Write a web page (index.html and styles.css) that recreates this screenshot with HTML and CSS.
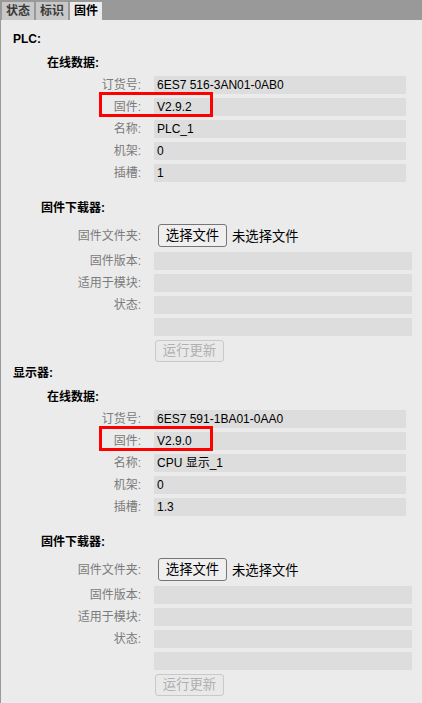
FILE: index.html
```html
<!DOCTYPE html>
<html lang="zh-CN">
<head>
<meta charset="utf-8">
<title>固件</title>
<link rel="stylesheet" href="styles.css">
</head>
<body>
<div class="tabs">
  <div class="tab">状态</div>
  <div class="tab">标识</div>
  <div class="tab active">固件</div>
</div>
<div class="panel">
  <section class="device">
    <div class="dev-title">PLC:</div>
    <div class="group-title">在线数据:</div>
    <div class="grid online">
      <div class="lbl">订货号:</div><div class="val">6ES7 516-3AN01-0AB0</div>
      <div class="lbl">固件:</div><div class="val">V2.9.2</div>
      <div class="lbl">名称:</div><div class="val">PLC_1</div>
      <div class="lbl">机架:</div><div class="val">0</div>
      <div class="lbl">插槽:</div><div class="val">1</div>
      <div class="mark"></div>
    </div>
    <div class="group-title dl">固件下载器:</div>
    <div class="file-row">
      <div class="lbl">固件文件夹:</div>
      <div class="file"><button class="btn" type="button">选择文件</button><span class="nofile">未选择文件</span></div>
    </div>
    <div class="grid dlgrid">
      <div class="lbl">固件版本:</div><div class="val"></div>
      <div class="lbl">适用于模块:</div><div class="val"></div>
      <div class="lbl">状态:</div><div class="val"></div>
      <div class="lbl"></div><div class="val"></div>
    </div>
    <div class="run-row"><button class="btn" type="button" disabled>运行更新</button></div>
  </section>

  <section class="device second">
    <div class="dev-title">显示器:</div>
    <div class="group-title">在线数据:</div>
    <div class="grid online">
      <div class="lbl">订货号:</div><div class="val">6ES7 591-1BA01-0AA0</div>
      <div class="lbl">固件:</div><div class="val">V2.9.0</div>
      <div class="lbl">名称:</div><div class="val">CPU 显示_1</div>
      <div class="lbl">机架:</div><div class="val">0</div>
      <div class="lbl">插槽:</div><div class="val">1.3</div>
      <div class="mark"></div>
    </div>
    <div class="group-title dl">固件下载器:</div>
    <div class="file-row">
      <div class="lbl">固件文件夹:</div>
      <div class="file"><button class="btn" type="button">选择文件</button><span class="nofile">未选择文件</span></div>
    </div>
    <div class="grid dlgrid">
      <div class="lbl">固件版本:</div><div class="val"></div>
      <div class="lbl">适用于模块:</div><div class="val"></div>
      <div class="lbl">状态:</div><div class="val"></div>
      <div class="lbl"></div><div class="val"></div>
    </div>
    <div class="run-row"><button class="btn" type="button" disabled>运行更新</button></div>
  </section>
</div>
</body>
</html>
```

FILE: styles.css
```css
* { box-sizing: border-box; }
html, body {
  margin: 0;
  padding: 0;
  background: #ebebeb;
}
body {
  font-family: "Liberation Sans", "Noto Sans CJK SC", sans-serif;
  font-size: 12px;
  color: #000;
  height: 703px;
  overflow: hidden;
}
.tabs {
  display: flex;
  gap: 2px;
  height: 20px;
  padding: 2px 0 0 2px;
  background: #999999;
}
.tab {
  height: 18px;
  line-height: 18px;
  padding: 0 4px;
  font-weight: bold;
  color: #3a3a3a;
  background: #c8c8c8;
}
.tab.active {
  background: #ebebeb;
  color: #000;
}
.panel {
  border-left: 1px solid #999999;
  background: #ebebeb;
  padding-top: 10px;
  height: 683px;
}
.device.second { margin-top: 2px; }
.dev-title {
  height: 18px;
  line-height: 18px;
  padding-left: 12px;
  font-weight: bold;
}
.group-title {
  margin-top: 6px;
  height: 18px;
  line-height: 18px;
  padding-left: 46px;
  font-weight: bold;
}
.group-title.dl {
  margin-top: 17px;
  padding-left: 40px;
}
.grid {
  position: relative;
  display: grid;
  grid-template-columns: 140px 252px;
  column-gap: 13px;
  row-gap: 4px;
  margin-top: 4px;
}
.grid.dlgrid {
  grid-template-columns: 140px 258px;
  margin-top: 5px;
}
.lbl {
  height: 18px;
  line-height: 18px;
  text-align: right;
  color: #7a7a7a;
  white-space: nowrap;
}
.val {
  height: 18px;
  line-height: 18px;
  padding-left: 3px;
  background: #dddddd;
  white-space: nowrap;
}
.mark {
  position: absolute;
  left: 98px;
  top: 16px;
  width: 114px;
  height: 25px;
  border: 3px solid #ff0000;
}
.file-row {
  display: grid;
  grid-template-columns: 140px auto;
  column-gap: 17px;
  align-items: center;
  margin-top: 7px;
  height: 23px;
}
.file {
  display: flex;
  align-items: center;
  gap: 5px;
}
.btn {
  font-family: "Liberation Sans", "Noto Sans CJK SC", sans-serif;
  font-size: 13.33px;
  height: 23px;
  width: 69px;
  padding: 0 6px;
  border: 1px solid #767676;
  border-radius: 3px;
  background: #efefef;
  color: #000;
  line-height: 20px;
}
.btn:disabled {
  height: 22px;
  border-color: #c9c9c9;
  background: #e9e9e9;
  color: #b0b0b0;
}
.nofile {
  font-size: 13.33px;
  color: #000;
}
.run-row {
  margin-top: 4px;
  padding-left: 154px;
  height: 22px;
  display: flex;
}
```
